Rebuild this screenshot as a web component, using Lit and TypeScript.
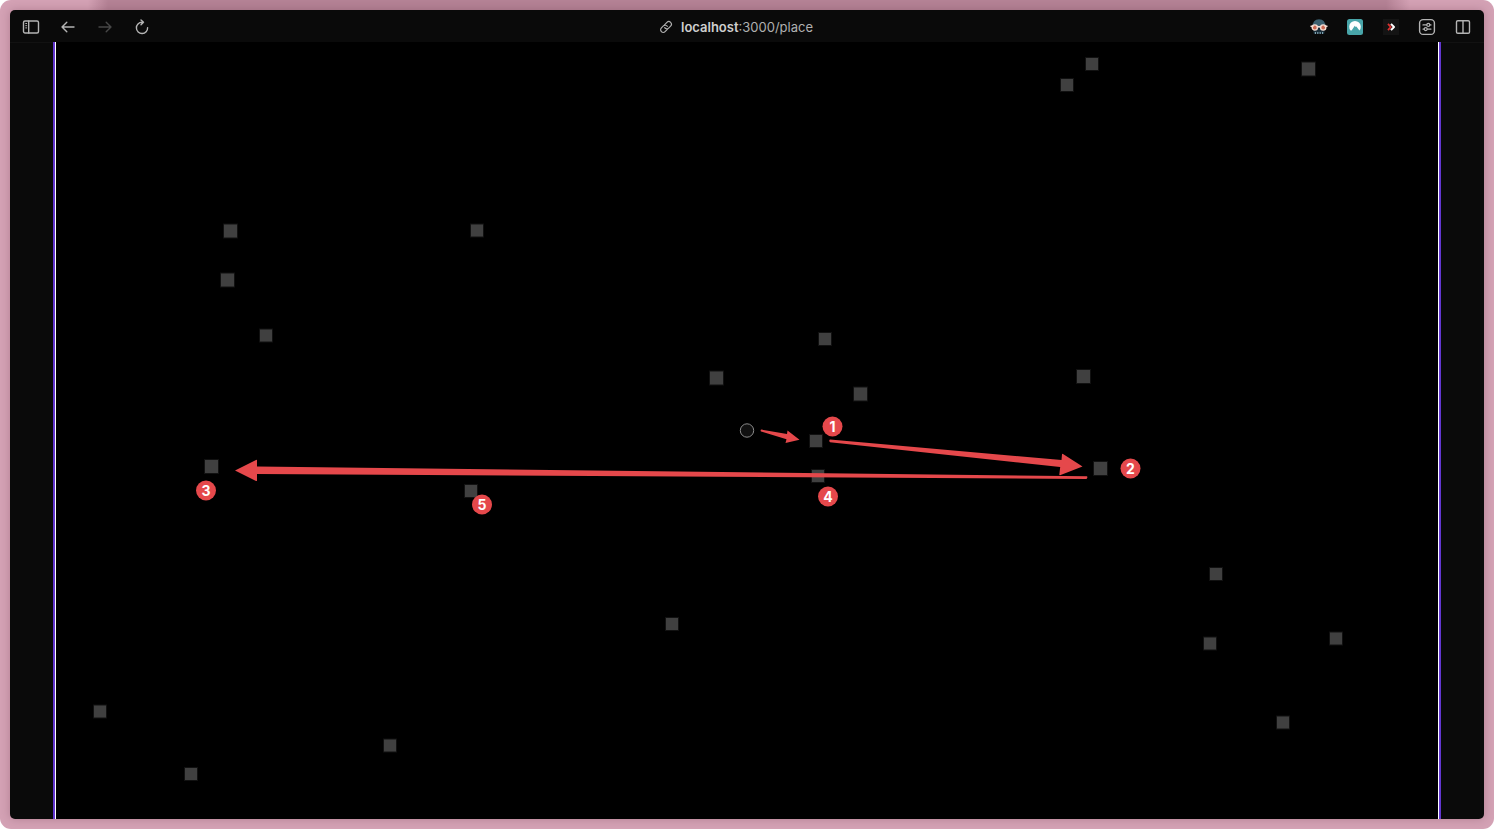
import { LitElement, html, svg, css } from "lit";
import { customElement } from "lit/decorators.js";

/** Centre of each square on the stage, with its side length. */
const SQUARES: [number, number, number][] = [
  [1092, 64, 12], [1067, 85, 12], [1308.5, 69, 13], [230.5, 231, 13], [477, 230.5, 12],
  [227.5, 280, 13], [266, 335.5, 12], [825, 339, 12], [716.5, 378, 13], [860.5, 394, 13],
  [1083.5, 376.5, 13], [816, 441, 12], [1100.5, 468.5, 13], [211.5, 466.5, 13],
  [818, 476, 12], [471, 491, 12], [1216, 574, 12], [672, 624, 12], [1210, 643.5, 12],
  [1336, 638.5, 12], [100, 711.5, 12], [1283, 722.5, 12], [390, 745.5, 12], [191, 774, 12],
];

const BADGES: [number, number, number][] = [
  [1, 832.5, 426.5], [2, 1130.5, 468.5], [3, 206, 490.5], [4, 828, 496.5], [5, 482, 504.5],
];

const ARROWS = [
  "M761.5 429.6L787 434L787.5 430.5L799.5 439.8L785.5 443L786.5 439.2L761 431.4Q760 430 761.5 429.6Z",
  "M830 439.5L1061.500 460L1062 454.300Q1062 453.500 1063 454L1082.500 466.500L1060 475.200Q1059 475 1059.400 474L1060.200 467L830 442.200Q828.500 440.500 830 439.500Z",
  "M1087 476.300L257 466.500V460.500Q257 459.500 256 460L235 470.500L256 481Q257 481.300 257 480.500V474L1086.500 479Q1088 477.500 1087 476.300Z",
];

@customElement("app-root")
export class AppRoot extends LitElement {
  static styles = css`
    :host {
      display: block;
      height: 100vh;
      background: #fff;
      font-family: Inter, "Liberation Sans", sans-serif;
    }
    .frame {
      box-sizing: border-box;
      height: 100%;
      padding: 10px;
      border-radius: 11px;
      background:
        linear-gradient(90deg, transparent 88px, #b48295 108px, #b48295 calc(100% - 108px), transparent calc(100% - 84px)) top / 100% 10px no-repeat,
        #d3a1b4;
    }
    .window {
      height: 100%;
      display: flex;
      flex-direction: column;
      overflow: hidden;
      border-radius: 5px;
      background: #0a0a0a;
      box-shadow: 0 0 8px rgb(80 30 50 / 0.25);
    }
    .toolbar {
      box-sizing: border-box;
      height: 32px;
      flex: none;
      display: grid;
      grid-template-columns: 1fr auto 1fr;
      align-items: center;
      padding: 1px 12px 0;
      box-shadow: 0 1px #121212;
      color: #b4b4b4;
    }
    .group {
      display: flex;
      align-items: center;
      gap: 19px;
    }
    .group.end {
      justify-content: flex-end;
      gap: 18px;
    }
    button {
      display: block;
      width: 18px;
      height: 18px;
      padding: 0;
      border: 0;
      background: none;
      color: inherit;
    }
    button:disabled {
      color: #474747;
    }
    button svg, .address svg {
      display: block;
      fill: none;
      stroke: currentColor;
      stroke-width: 1.4;
      stroke-linecap: round;
      stroke-linejoin: round;
    }
    .address svg {
      stroke-width: 1.2;
    }
    .address {
      display: flex;
      align-items: center;
      gap: 8px;
      padding-right: 22px;
      color: #b0b0b0;
      font-size: 13px;
      line-height: 16px;
      text-decoration: none;
    }
    .host {
      color: #cfcfcf;
      font-weight: 600;
    }
    .page {
      flex: 1;
      min-height: 0;
      padding: 0 43px;
      display: flex;
    }
    .stage {
      flex: 1;
      min-width: 0;
      border: solid #6236d0;
      border-width: 0 2px;
      background: #000;
    }
    .edge {
      box-sizing: border-box;
      height: 100%;
      border: solid #fff;
      border-width: 0 1px;
    }
    .drawing {
      display: block;
      width: 100%;
      height: 100%;
    }
    .square {
      fill: #404040;
      stroke: #111;
      stroke-width: 2;
      paint-order: stroke;
    }
    .cursor {
      fill: #101010;
      stroke: #8a8a8a;
    }
    .arrow, .disc {
      fill: #e5484b;
    }
    .number {
      fill: #fff;
      font-size: 14px;
      font-weight: 700;
      text-anchor: middle;
    }
  `;

  private toolbar() {
    return html`
      <header class="toolbar">
        <nav class="group">
          <button aria-label="Toggle sidebar"><svg width="18" height="18" viewBox="0 0 18 18">
            <rect x="1.500" y="3" width="15" height="12" rx="1.500"></rect>
            <path d="M6.700 3v12"></path><path d="M3.700 5.500h1M3.700 7.700h1M3.700 9.900h1" stroke-width="1"></path>
          </svg></button>
          <button aria-label="Back"><svg width="18" height="18" viewBox="0 0 18 18">
            <path d="M15 9H3M7.800 4.200L3 9l4.800 4.800"></path>
          </svg></button>
          <button aria-label="Forward" disabled><svg width="18" height="18" viewBox="0 0 18 18">
            <path d="M3 9h12M10.200 4.200L15 9l-4.800 4.800"></path>
          </svg></button>
          <button aria-label="Reload"><svg width="18" height="18" viewBox="0 0 18 18">
            <path d="M14.600 9.600A5.600 5.600 0 1 1 9 4.300H10.500M8 1.900l2.500 2.400L8 6.800"></path>
          </svg></button>
        </nav>
        <a class="address" href="#place">
          <svg width="14" height="14" viewBox="0 0 14 14">
            <g transform="rotate(-45 7 7)">
              <path d="M6.200 9.600H3.100a2.600 2.600 0 0 1 0-5.200h2.800a2.600 2.600 0 0 1 2.500 3.100"></path>
              <path d="M7.800 4.400h3.100a2.600 2.600 0 0 1 0 5.200H8.100a2.600 2.600 0 0 1-2.500-3.100"></path>
            </g>
          </svg>
          <span><span class="host">localhost</span>:3000/place</span>
        </a>
        <div class="group end">
          <button aria-label="Reader extension"><svg width="18" height="18" viewBox="0 0 18 18">
            <g stroke="none">
              <path fill="#3b6070" d="M2.500 9Q2.500 1.200 9 1.200T15.500 9v1H2.500Z"></path>
              <path fill="#182c38" d="M3.500 10h11v5.500H3.500Z"></path>
              <path fill="#7fa3b2" d="M4.800 14h1.200v2H4.800ZM7.200 14h1.200v2H7.200ZM9.600 14h1.200v2H9.600ZM12 14h1.200v2H12Z"></path>
            </g>
            <circle cx="4.800" cy="9.500" r="2.600" fill="#c96852" stroke="#f4dcd2"></circle>
            <circle cx="13.200" cy="9.500" r="2.600" fill="#c96852" stroke="#f4dcd2"></circle>
            <path d="M1 8.300h2M7.400 8.700h3.200M15 8.300h2" stroke="#f4dcd2"></path>
          </svg></button>
          <button aria-label="VPN extension"><svg width="18" height="18" viewBox="0 0 18 18">
            <rect x="1" y="1" width="16" height="16" rx="2.500" fill="#48a5a9" stroke="none"></rect>
            <path stroke="none" fill="#fff" d="M4.600 12.600A5.800 5.800 0 1 1 13.400 12.600L10.400 8.400 9.700 9 8.800 7.700 5.600 12.600Z"></path>
          </svg></button>
          <button aria-label="Shortcut extension"><svg width="18" height="18" viewBox="0 0 18 18">
            <rect x="1" y="1" width="16" height="16" fill="#141414" stroke="none"></rect>
            <path d="M6 5.800L8.800 9 6 12.200" stroke="#d9302f" stroke-width="1.800" stroke-linecap="butt"></path>
            <path d="M9 5.900L12 9 9 12.100" stroke="#fff" stroke-width="2" stroke-linecap="butt"></path>
          </svg></button>
          <button aria-label="Site settings"><svg width="18" height="18" viewBox="0 0 18 18">
            <rect x="1.600" y="1.600" width="14.800" height="14.800" rx="3.500"></rect>
            <path d="M5 6.900h3.600M12 6.900h1M5 11.100h1M9.400 11.100H13" stroke-width="1.200"></path>
            <circle cx="10.300" cy="6.900" r="1.500" stroke-width="1.200"></circle>
            <circle cx="7.700" cy="11.100" r="1.500" stroke-width="1.200"></circle>
          </svg></button>
          <button aria-label="Split view"><svg width="18" height="18" viewBox="0 0 18 18">
            <rect x="2.500" y="2.700" width="13" height="12.600" rx="1.300"></rect>
            <path d="M9 2.700v12.600"></path>
          </svg></button>
        </div>
      </header>
    `;
  }

  render() {
    return html`
      <div class="frame">
        <div class="window">
          ${this.toolbar()}
          <main class="page">
            <div class="stage">
              <div class="edge">
                <svg class="drawing" viewBox="56 42 1382 777" role="img" aria-label="Order in which the squares are visited">
                  ${SQUARES.map(([x, y, s]) => svg`<rect class="square" x=${x - s / 2} y=${y - s / 2} width=${s} height=${s}></rect>`)}
                  <circle class="cursor" cx="747" cy="430.500" r="6.700"></circle>
                  ${ARROWS.map((d) => svg`<path class="arrow" d=${d}></path>`)}
                  ${BADGES.map(([n, x, y]) => svg`
                    <circle class="disc" cx=${x} cy=${y} r="10"></circle>
                    <text class="number" x=${x} y=${y + 5}>${n}</text>`)}
                </svg>
              </div>
            </div>
          </main>
        </div>
      </div>
    `;
  }
}
